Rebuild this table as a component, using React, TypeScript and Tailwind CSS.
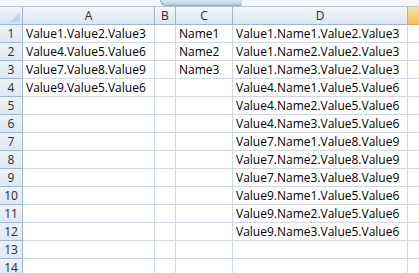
import React from "react";

const cols = [
  { name: "A", w: 132 },
  { name: "B", w: 21 },
  { name: "C", w: 57 },
  { name: "D", w: 175 },
];

const data: [string, string, string, string][] = [
  ["Value1.Value2.Value3", "", "Name1", "Value1.Name1.Value2.Value3"],
  ["Value4.Value5.Value6", "", "Name2", "Value1.Name2.Value2.Value3"],
  ["Value7.Value8.Value9", "", "Name3", "Value1.Name3.Value2.Value3"],
  ["Value9.Value5.Value6", "", "", "Value4.Name1.Value5.Value6"],
  ["", "", "", "Value4.Name2.Value5.Value6"],
  ["", "", "", "Value4.Name3.Value5.Value6"],
  ["", "", "", "Value7.Name1.Value8.Value9"],
  ["", "", "", "Value7.Name2.Value8.Value9"],
  ["", "", "", "Value7.Name3.Value8.Value9"],
  ["", "", "", "Value9.Name1.Value5.Value6"],
  ["", "", "", "Value9.Name2.Value5.Value6"],
  ["", "", "", "Value9.Name3.Value5.Value6"],
  ["", "", "", ""],
  ["", "", "", ""],
];

export default function App() {
  return (
    <div
      className="w-[419px] h-[273px] overflow-hidden bg-white flex flex-col"
      style={{ fontFamily: "'Open Sans', 'Liberation Sans', sans-serif" }}
    >
      {/* top strip */}
      <div className="relative h-[7px] shrink-0 bg-[#f4f7fb] border-b border-[#b6c6da]">
        <div className="absolute left-[160px] top-0 w-[82px] h-[6px] rounded-bl-[6px] rounded-br-[2px] bg-gradient-to-b from-[#dbe7f5] to-[#b9cde6] border-b border-l border-[#8ea9cc]" />
      </div>
      {/* header row */}
      <div className="flex h-[18px] shrink-0">
        <div className="relative w-[23px] shrink-0 bg-gradient-to-b from-[#f3f6fb] to-[#d6e2f1] border-r border-b border-[#9eb6ce]">
          <div className="absolute right-[2px] bottom-[2px] w-0 h-0 border-l-[10px] border-l-transparent border-b-[10px] border-b-[#c6d4e6]" />
        </div>
        {cols.map((c) => (
          <div
            key={c.name}
            style={{ width: c.w }}
            className="shrink-0 flex items-center justify-center text-[12px] text-[#2c2c2c] bg-gradient-to-b from-[#f4f7fb] to-[#dce6f3] border-r border-b border-[#9eb6ce]"
          >
            {c.name}
          </div>
        ))}
        <div className="flex-1 bg-gradient-to-b from-[#fbdfa4] to-[#f4c35f] border-b border-[#f2a43c]" />
      </div>
      {/* rows */}
      {data.map((row, i) => (
        <div key={i} className="flex h-[18px] shrink-0">
          <div className="w-[23px] shrink-0 flex items-center justify-center text-[12px] text-[#2c2c2c] bg-gradient-to-b from-[#edf2f9] to-[#dfe8f5] border-r border-b border-[#9eb6ce]">
            {i + 1}
          </div>
          {cols.map((c, j) => (
            <div
              key={c.name}
              style={{ width: c.w }}
              className="shrink-0 flex items-center pl-[3px] text-[12px] text-black whitespace-nowrap overflow-hidden border-r border-b border-[#d0d7e5]"
            >
              {row[j]}
            </div>
          ))}
          <div className="flex-1 border-b border-[#d0d7e5]" />
        </div>
      ))}
    </div>
  );
}
